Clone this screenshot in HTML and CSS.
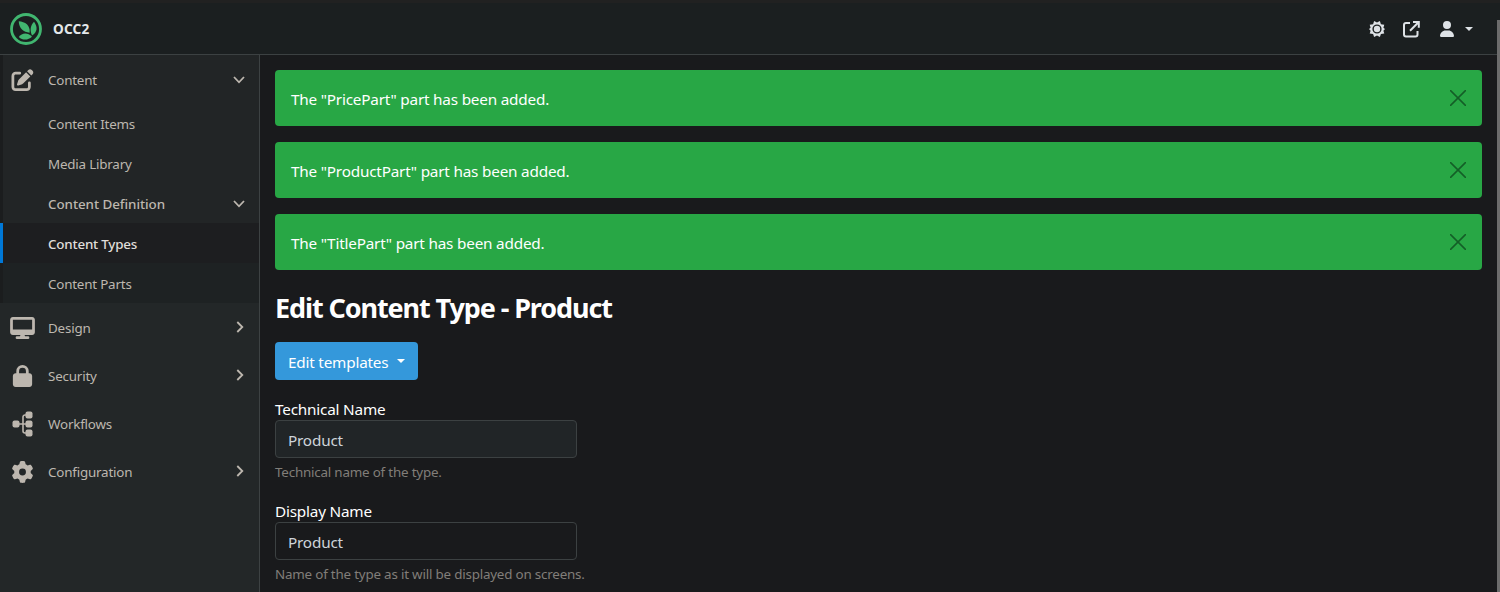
FILE: index.html
```html
<!DOCTYPE html>
<html lang="en">
<head>
<meta charset="utf-8">
<title>Edit Content Type - Product</title>
<link rel="stylesheet" href="styles.css">
</head>
<body>
<svg class="sprite" width="0" height="0">
  <symbol id="down" viewBox="0 0 12 8"><path d="M1 1l5 5.3L11 1" fill="none" stroke="currentColor" stroke-width="1.8"/></symbol>
  <symbol id="right" viewBox="0 0 8 12"><path d="M1.3 1l5 5-5 5" fill="none" stroke="currentColor" stroke-width="1.8"/></symbol>
  <symbol id="close" viewBox="0 0 16 16"><path d="M.6.6l14.8 14.8M15.4.6L.6 15.4" fill="none" stroke="currentColor" stroke-width="1.5" stroke-linecap="round"/></symbol>
</svg>
<div class="app">
  <header class="topbar">
    <a class="brand">
      <svg width="32" height="32" viewBox="0 0 32 32"><circle cx="16" cy="16" r="14.5" fill="none" stroke="#41b670" stroke-width="2.800"/><g fill="#41b670"><path d="M8.700 8.300C15 8.600 20.600 12.500 19.600 19.700 13.500 19.200 9 15.500 8.700 8.300z"/><path d="M24 8.800c4 5.400 3.300 10.400-2 13.700-2.300-5-1.700-10 2-13.700z"/><path d="M8.800 24c3-4.200 8.800-5 13.200-.2-4 3.700-9.500 3.700-13.200.2z"/></g></svg>
      <span>OCC2</span>
    </a>
    <nav class="tools">
      <svg width="16" height="16" viewBox="0 0 16 16"><path fill="currentColor" fill-rule="evenodd" d="M8 1.400L10.900 0l1 3.200 3.400.6-.9 3L16 8l-1.600 1.700.9 2.800-3.400.6-1 2.900L8 14.600 5.100 16l-1-2.900-3.400-.6.900-2.800L0 8l1.600-1.200-.9-3 3.400-.6 1-3.200zM8 3.400a4.600 4.600 0 100 9.200 4.600 4.600 0 000-9.200z"/><circle cx="8" cy="8" r="3.200" fill="currentColor"/></svg>
      <svg class="external" width="17" height="17" viewBox="0 0 17 17" fill="none" stroke="currentColor" stroke-width="2"><path d="M7 2H3a2 2 0 00-2 2v9.500a2 2 0 002 2h9.500a2 2 0 002-2V10M10 1h5.800v5.800M15.500 1.300L7 9.800"/></svg>
      <svg class="user" width="14" height="16" viewBox="0 0 448 512"><path fill="currentColor" d="M224 256A128 128 0 10224 0a128 128 0 000 256zm-45.700 48C79.800 304 0 383.800 0 482.300 0 498.700 13.300 512 29.700 512h388.600c16.400 0 29.700-13.300 29.700-29.700C448 383.800 368.200 304 269.700 304z"/></svg>
      <i class="caret"></i>
    </nav>
  </header>
  <div class="body">
    <aside class="sidebar">
      <div class="group">
        <a class="item first"><svg class="icon" viewBox="0 0 512 512"><path fill="currentColor" d="M471.600 21.700c-21.900-21.900-57.300-21.900-79.200 0l-30.100 30 97.900 97.900 30.100-30.100c21.900-21.900 21.900-57.300 0-79.200zm-299.200 220c-6.100 6.100-10.800 13.600-13.500 21.900l-29.600 88.800c-2.900 8.600-.6 18.100 5.800 24.600s15.900 8.700 24.600 5.800l88.800-29.600c8.200-2.700 15.700-7.400 21.900-13.500l167.300-167.400-98-98zM96 64c-53 0-96 43-96 96v256c0 53 43 96 96 96h256c53 0 96-43 96-96v-96a32 32 0 00-64 0v96c0 17.700-14.300 32-32 32H96c-17.700 0-32-14.300-32-32V160c0-17.700 14.300-32 32-32h96a32 32 0 000-64z"/></svg><span>Content</span><svg class="down"><use href="#down"/></svg></a>
        <a class="sub">Content Items</a>
        <a class="sub">Media Library</a>
        <a class="sub semi"><span>Content Definition</span><svg class="down"><use href="#down"/></svg></a>
        <a class="sub active">Content Types</a>
        <a class="sub deep">Content Parts</a>
      </div>
      <a class="item"><svg class="icon" viewBox="0 0 576 512"><path fill="currentColor" d="M64 0C28.700 0 0 28.700 0 64v288c0 35.300 28.700 64 64 64h176l-10.700 32H160a32 32 0 000 64h256a32 32 0 000-64h-69.300L336 416h176c35.300 0 64-28.700 64-64V64c0-35.300-28.700-64-64-64zM512 64v224H64V64z"/></svg><span>Design</span><svg class="right"><use href="#right"/></svg></a>
      <a class="item"><svg class="icon" viewBox="0 0 448 512"><path fill="currentColor" d="M144 144v48h160v-48a80 80 0 00-160 0zm-64 48v-48a144 144 0 01288 0v48h16c35.300 0 64 28.700 64 64v192c0 35.300-28.700 64-64 64H64c-35.300 0-64-28.700-64-64V256c0-35.300 28.700-64 64-64z"/></svg><span>Security</span><svg class="right"><use href="#right"/></svg></a>
      <a class="item"><svg class="icon flow" viewBox="0 0 20 26"><g fill="currentColor"><rect x="0" y="9.500" width="7" height="7" rx="2"/><rect x="13" y="0.500" width="7" height="7" rx="2"/><rect x="13" y="9.500" width="7" height="7" rx="2"/><rect x="13" y="18.500" width="7" height="7" rx="2"/></g><path d="M6 13h8M14 4h-1.500a2 2 0 00-2 2v14a2 2 0 002 2H14" fill="none" stroke="currentColor" stroke-width="1.600"/></svg><span>Workflows</span></a>
      <a class="item"><svg class="icon" viewBox="0 0 512 512"><path fill="currentColor" d="M495.900 166.600c3.200 8.700.5 18.400-6.400 24.600l-43.300 39.400c1.100 8.300 1.700 16.800 1.700 25.400s-.6 17.100-1.700 25.400l43.300 39.400c6.900 6.200 9.600 15.900 6.400 24.600-4.400 11.900-9.700 23.300-15.800 34.300l-4.700 8.100c-6.600 11-14 21.400-22.100 31.200-5.900 7.200-15.700 9.600-24.500 6.800l-55.700-17.700c-13.400 10.300-28.200 18.900-44 25.400l-12.500 57.100c-2 9.100-9 16.300-18.200 17.800-13.800 2.300-28 3.500-42.500 3.500s-28.700-1.200-42.500-3.500c-9.200-1.500-16.200-8.700-18.200-17.800l-12.500-57.100c-15.800-6.500-30.600-15.100-44-25.400l-55.600 17.800c-8.800 2.800-18.600.3-24.500-6.800-8.100-9.800-15.500-20.200-22.100-31.200l-4.700-8.100c-6.100-11-11.400-22.400-15.800-34.300-3.200-8.700-.5-18.400 6.400-24.600l43.300-39.400C64.600 273.100 64 264.600 64 256s.6-17.100 1.700-25.400l-43.300-39.400c-6.900-6.200-9.600-15.900-6.400-24.600 4.400-11.900 9.700-23.300 15.800-34.300l4.700-8.100c6.600-11 14-21.400 22.100-31.200 5.900-7.200 15.700-9.600 24.500-6.800l55.700 17.700c13.400-10.300 28.200-18.900 44-25.400l12.500-57.100c2-9.100 9-16.300 18.200-17.800C227.300 1.200 241.500 0 256 0s28.700 1.200 42.500 3.500c9.200 1.500 16.200 8.700 18.200 17.800l12.500 57.100c15.800 6.500 30.600 15.100 44 25.400l55.700-17.700c8.800-2.800 18.600-.3 24.500 6.800 8.100 9.800 15.500 20.200 22.100 31.200l4.700 8.100c6.100 11 11.400 22.400 15.800 34.300zM256 336a80 80 0 100-160 80 80 0 000 160z"/></svg><span>Configuration</span><svg class="right"><use href="#right"/></svg></a>
    </aside>
    <main class="main">
      <div class="alert"><span>The "PricePart" part has been added.</span><svg class="close"><use href="#close"/></svg></div>
      <div class="alert"><span>The "ProductPart" part has been added.</span><svg class="close"><use href="#close"/></svg></div>
      <div class="alert"><span>The "TitlePart" part has been added.</span><svg class="close"><use href="#close"/></svg></div>
      <h1>Edit Content Type - Product</h1>
      <button class="btn"><span>Edit templates</span><i class="caret"></i></button>
      <div class="field">
        <label>Technical Name</label>
        <div class="input disabled">Product</div>
        <p class="hint">Technical name of the type.</p>
      </div>
      <div class="field">
        <label>Display Name</label>
        <div class="input">Product</div>
        <p class="hint">Name of the type as it will be displayed on screens.</p>
      </div>
    </main>
  </div>
  <div class="scrollbar"></div>
</div>
</body>
</html>
```
FILE: styles.css
```css
* { box-sizing: border-box; }
body { margin: 0; background: #191a1c; font: 15.3px/24px "Noto Sans", "Open Sans", sans-serif; letter-spacing: -.2px; color: #fff; }
.sprite { display: none; }
svg { display: block; flex: none; }
.app { position: relative; height: 592px; overflow: hidden; display: flex; flex-direction: column; }
.topbar { height: 55px; flex: none; display: flex; align-items: center; justify-content: space-between; padding: 1px 27px 0 10px; background: #1b1f20; border-top: 3px solid #212121; border-bottom: 1px solid #3c4142; }
.brand { display: flex; align-items: center; gap: 11px; font-size: 13.6px; font-weight: 700; color: #e3e7ea; letter-spacing: .15px; }
.tools { display: flex; align-items: center; color: #dee2e6; }
.external { margin-left: 18px; }
.user { margin-left: 20px; }
.caret { width: 0; height: 0; border: 4.500px solid transparent; border-top-color: currentColor; border-bottom: 0; }
.tools .caret { margin-left: 11px; }
.body { flex: 1; display: flex; min-height: 0; }
.sidebar { width: 260px; flex: none; background: #232728; border-right: 1px solid #3d4243; color: #bdb7af; font-size: 13.4px; }
.group { height: 248px; border-left: 3px solid #1b1d1e; background: #222526; }
.item { height: 48px; display: flex; align-items: center; padding: 1px 15px 0 10px; }
.item.first { height: 49px; padding-left: 7px; }
.item span { flex: 1; }
.icon { width: 25px; height: 22px; margin-right: 13px; }
.icon.flow { height: 26px; }
.down { width: 12px; height: 8px; margin-right: -1px; }
.item .down { margin-top: -1px; }
.right { width: 8px; height: 12px; margin: -2px 0 0; }
.sub { height: 40px; padding: 1px 15px 0 45px; display: flex; align-items: center; justify-content: space-between; }
.group .sub:nth-child(2) { height: 39px; }
.semi { font-weight: 500; letter-spacing: -.06px; }
.active { font-weight: 500; color: #e0dedb; background: #1d1e20; margin-left: -3px; border-left: 3px solid #0078d7; }
.deep { background: #1e2223; }
.main { flex: 1; padding: 15px 18px 0 15px; }
.alert { height: 56px; margin-bottom: 16px; padding: 2px 16px 0; border-radius: 4px; background: #28a745; display: flex; align-items: center; justify-content: space-between; }
.close { width: 16px; height: 16px; margin-top: -2px; color: #145e27; }
h1 { margin: 0 0 16px; height: 40px; font-size: 27px; line-height: 44px; font-weight: 700; letter-spacing: -1.1px; }
.btn { height: 38px; width: 143px; display: flex; align-items: center; justify-content: space-between; padding: 2px 13px 0 13px; border: 0; border-radius: 4px; background: #3498db; color: #fff; font: inherit; letter-spacing: inherit; }
.btn .caret { margin-top: -3px; }
.field { margin-top: 18px; height: 84px; }
label { display: block; height: 22px; line-height: 22px; }
.input { width: 302px; height: 38px; padding: 2px 12px 0; line-height: 35px; border: 1px solid #3c4142; border-radius: 4px; color: #ced4da; }
.disabled { background: #212527; }
.hint { margin: 4px 0 0; font-size: 13.4px; line-height: 21px; color: #817e79; }
.scrollbar { position: absolute; right: 0; top: 20px; width: 3px; height: 572px; background: #6c6c6c; }
```
